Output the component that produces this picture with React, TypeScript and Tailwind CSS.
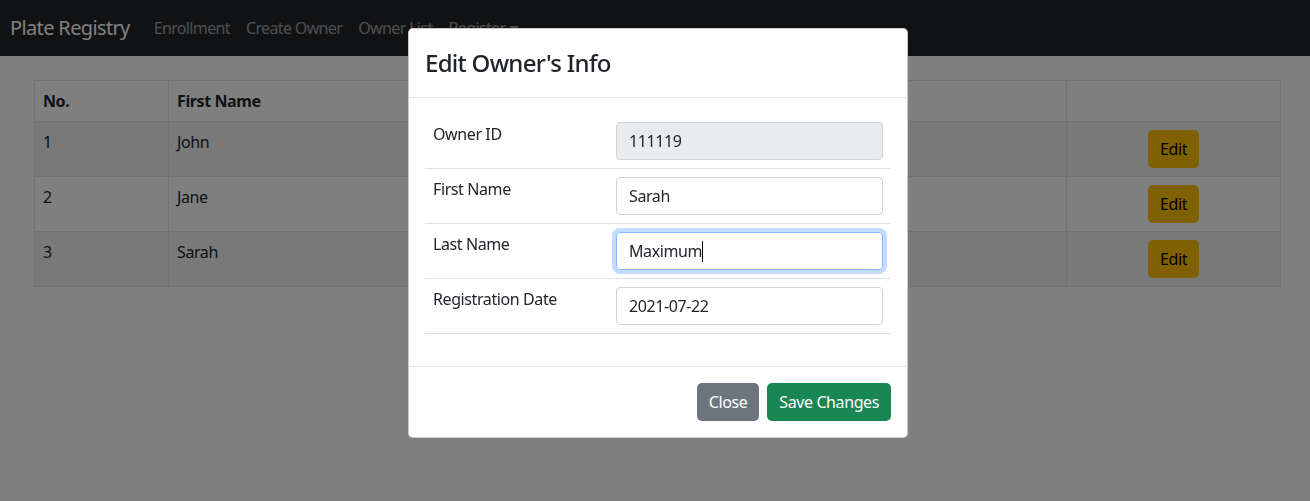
import React from 'react';

const NAV_LINKS = ['Enrollment', 'Create Owner', 'Owner List'];

const OWNERS = [
  { no: 1, first: 'John', last: 'Doe' },
  { no: 2, first: 'Jane', last: 'Smith' },
  { no: 3, first: 'Sarah', last: 'Connor' },
];

const Navbar = () => (
  <nav className="h-14 bg-[#212529] flex items-center px-[10px] tracking-[-0.04em]">
    <span className="text-xl text-white mr-4 py-[5px]">Plate Registry</span>
    <ul className="flex">
      {NAV_LINKS.map(link => (
        <li key={link} className="px-2 py-2 text-white/55">
          {link}
        </li>
      ))}
      <li className="px-2 py-2 text-white/55 flex items-center">
        Register
        <span className="ml-[4px] inline-block border-t-[5px] border-x-[5px] border-x-transparent border-t-current" />
      </li>
    </ul>
  </nav>
);

const OwnerTable = () => (
  <div className="pt-6 pl-[34px] pr-[29px]">
    <table className="w-full border-collapse border border-[#dee2e6] text-[#212529] align-top">
      <thead>
        <tr className="text-left">
          <th className="w-[134px] border border-[#dee2e6] p-2 font-bold">No.</th>
          <th className="w-[450px] border border-[#dee2e6] p-2 font-bold">First Name</th>
          <th className="border border-[#dee2e6] p-2 font-bold">Last Name</th>
          <th className="w-[214px] border border-[#dee2e6] p-2" />
        </tr>
      </thead>
      <tbody>
        {OWNERS.map(o => (
          <tr key={o.no} className={o.no % 2 === 1 ? 'bg-black/5' : ''}>
            <td className="border border-[#dee2e6] p-2 align-top">{o.no}</td>
            <td className="border border-[#dee2e6] p-2 align-top">{o.first}</td>
            <td className="border border-[#dee2e6] p-2 align-top">{o.last}</td>
            <td className="border border-[#dee2e6] p-2 text-center">
              <button className="h-[38px] px-3 rounded-[5px] bg-[#ffc107] text-black">Edit</button>
            </td>
          </tr>
        ))}
      </tbody>
    </table>
  </div>
);

const Field = ({ label, children }: { label: string; children: React.ReactNode }) => (
  <tr className="border-b border-[#dee2e6]">
    <td className="w-[183px] p-2 align-top">{label}</td>
    <td className="p-2 align-top">{children}</td>
  </tr>
);

const inputCls =
  'w-full h-[38px] px-3 rounded-[4px] border border-[#ced4da] text-[#212529] tracking-[-0.025em] outline-none';

const EditModal = () => (
  <div className="fixed inset-0 bg-black/50 flex justify-center items-start pl-[6px] pt-[28px]">
    <div className="w-[500px] bg-white border border-black/20 rounded-[5px] text-[#212529]">
      {/* Header */}
      <div className="p-4 border-b border-[#dee2e6]">
        <h4 className="text-2xl leading-9 font-medium tracking-[-0.03em]">Edit Owner's Info</h4>
      </div>

      {/* Body */}
      <div className="p-4">
        <table className="w-full mb-4 border-collapse">
          <tbody>
            <Field label="Owner ID">
              <input className={`${inputCls} bg-[#e9ecef]`} value="111119" readOnly />
            </Field>
            <Field label="First Name">
              <input className={`${inputCls} bg-white`} value="Sarah" readOnly />
            </Field>
            <Field label="Last Name">
              <div className="w-full h-[38px] px-3 rounded-[4px] border border-[#86b7fe] shadow-[0_0_0_4px_rgba(13,110,253,0.25)] flex items-center">
                <span className="border-r border-black leading-[21px]">Maximum</span>
              </div>
            </Field>
            <Field label="Registration Date">
              <input className={`${inputCls} bg-white`} value="2021-07-22" readOnly />
            </Field>
          </tbody>
        </table>
      </div>

      {/* Footer */}
      <div className="p-3 border-t border-[#dee2e6] flex justify-end">
        <button className="m-1 h-[38px] px-3 rounded-[5px] bg-[#6c757d] text-white">Close</button>
        <button className="m-1 h-[38px] px-3 rounded-[5px] bg-[#198754] text-white">Save Changes</button>
      </div>
    </div>
  </div>
);

export default function App() {
  return (
    <div className="min-h-screen bg-white font-['Noto_Sans',sans-serif] text-base leading-6 tracking-[-0.025em]">
      <Navbar />
      <OwnerTable />
      <EditModal />
    </div>
  );
}
